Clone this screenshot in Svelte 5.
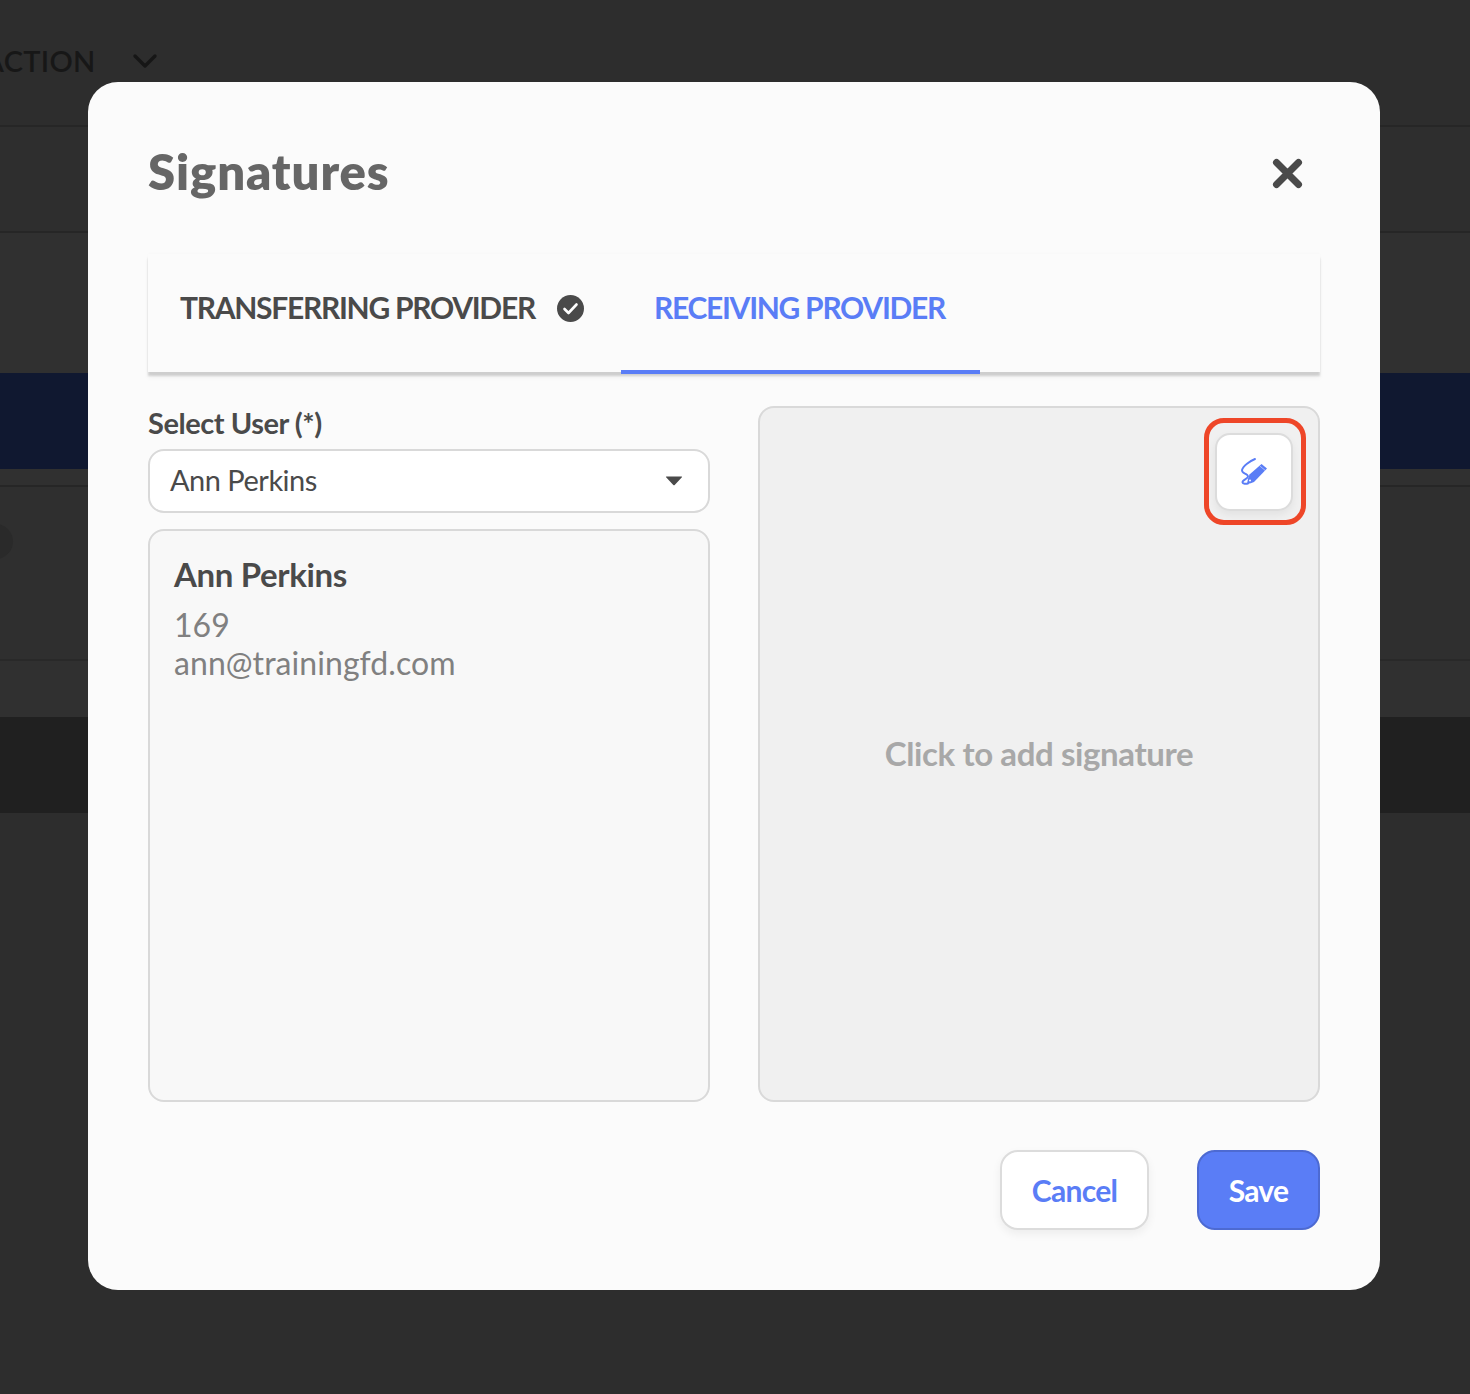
<script>
  const tabs = { first: 'TRANSFERRING PROVIDER', second: 'RECEIVING PROVIDER' };
</script>

<div class="page">
  <div class="bg">
    <div class="head">
      <span class="action">ACTION</span>
      <svg class="chev" width="26" height="16" viewBox="0 0 26 16"><path d="M3 3l10 10L23 3" fill="none" stroke="#161616" stroke-width="3.4" stroke-linecap="round" stroke-linejoin="round"/></svg>
    </div>
    <div class="row r1"></div>
    <div class="row r2"></div>
    <div class="navy"></div>
    <div class="row r3"></div>
    <div class="row r4"><span class="dot"></span></div>
    <div class="row r5"></div>
    <div class="dark"></div>
  </div>

  <div class="overlay">
    <section class="modal">
      <header class="top">
        <h1>Signatures</h1>
        <svg class="close" width="32" height="32" viewBox="0 0 32 32"><path d="M4.500 4.500l22 22M26.500 4.500l-22 22" fill="none" stroke="#4a4a4a" stroke-width="7" stroke-linecap="round"/></svg>
      </header>

      <nav class="tabs">
        <div class="tab t1">
          <span>{tabs.first}</span>
          <svg width="27" height="27" viewBox="0 0 27 27"><circle cx="13.500" cy="13.500" r="13.500" fill="#4a4a4a"/><path d="M7.500 14l4 4 8-8.500" fill="none" stroke="#fff" stroke-width="2.600" stroke-linecap="round" stroke-linejoin="round"/></svg>
        </div>
        <div class="tab t2"><span>{tabs.second}</span></div>
      </nav>

      <div class="cols">
        <div class="left">
          <label class="label" for="u">Select User (*)</label>
          <div class="select" id="u">
            <span class="sel-text">Ann Perkins</span>
            <svg width="18" height="10" viewBox="0 0 18 10"><path d="M1.500 0.500h15q1 0 .4.800L9.700 9q-.7.700-1.400 0L1.100 1.300q-.6-.8.400-.800z" fill="#4a4a4a"/></svg>
          </div>
          <div class="card">
            <h2>Ann Perkins</h2>
            <p>169</p>
            <p>ann@trainingfd.com</p>
          </div>
        </div>
        <div class="sig">
          <div class="highlight">
            <button class="pen" aria-label="Edit signature">
              <svg width="30" height="30" viewBox="0 0 30 30">
                <path d="M16 2C11 4 4 9 3 13C2.300 17 9 16 9 19.500C9 22 3 23 3.500 25.500C3.800 27 7 27 9 26.500" fill="none" stroke="#5a7df6" stroke-width="1.900" stroke-linecap="round"/>
                <path d="M22.500 7L28 11.500L15 25Q12 26.500 8 27Q8.500 22 10.500 17.500Z" fill="#5a7df6"/>
                <path d="M20.800 9l5.400 4.400" stroke="#fff" stroke-width=".7" opacity=".7" fill="none"/>
                <circle cx="11" cy="23.500" r="1" fill="#fff"/>
              </svg>
            </button>
          </div>
          <span class="hint">Click to add signature</span>
        </div>
      </div>

      <footer class="actions">
        <button class="btn cancel">Cancel</button>
        <button class="btn save">Save</button>
      </footer>
    </section>
  </div>
</div>

<style>
  :global(body) { margin: 0; background: #2d2d2d; }
  .page { position: relative; width: 1470px; height: 1394px; overflow: hidden; background: #2d2d2d; font-family: Lato, "Liberation Sans", sans-serif; }
  .bg { display: flex; flex-direction: column; }
  .head { height: 125px; border-bottom: 2px solid #262626; display: flex; align-items: flex-start; }
  .action { margin-left: -16px; margin-top: 44px; font-size: 29px; line-height: 34px; font-weight: 600; color: #171717; letter-spacing: .3px; width: 102px; flex: none; }
  .chev { margin-left: 46px; margin-top: 53px; }
  .row { box-sizing: border-box; background: #303030; }
  .r1 { height: 106px; border-bottom: 2px solid #262626; background: #2e2e2e; }
  .r2 { height: 140px; background: #303030; }
  .navy { height: 96px; background: #101830; }
  .r3 { height: 18px; border-bottom: 2px solid #262626; background: #303030; }
  .r4 { height: 174px; border-bottom: 2px solid #292929; background: #2f2f2f; position: relative; }
  .r5 { height: 56px; background: #303030; }
  .dot { position: absolute; left: -22px; top: 37px; width: 35px; height: 35px; border-radius: 50%; background: #2a2a2a; }
  .dark { height: 96px; background: #202020; }

  .overlay { position: absolute; inset: 0; display: flex; justify-content: center; align-items: flex-start; padding-top: 82px; padding-right: 2px; box-sizing: border-box; }
  .modal { box-sizing: border-box; width: 1292px; height: 1208px; background: #fbfbfb; border-radius: 30px; padding: 0 60px; display: flex; flex-direction: column; }
  .top { height: 172px; display: flex; justify-content: space-between; align-items: flex-start; }
  h1 { margin: 59px 0 0; font-size: 49px; line-height: 60px; font-weight: 800; color: #666; letter-spacing: 0.9px; }
  .close { margin-top: 76px; margin-right: 16px; }

  .tabs { height: 118px; margin-bottom: 2px; display: flex; background: #fbfbfb; box-shadow: 0 4px 2px rgba(0,0,0,.15), 0 6px 5px rgba(0,0,0,.04), 0 -1px 3px rgba(0,0,0,.015); }
  .tab { box-sizing: border-box; display: flex; align-items: center; font-size: 30px; font-weight: 700; letter-spacing: -1.28px; }
  .tab span, .tab svg { position: relative; }
  .t1 { height: 118px; width: 473px; padding-left: 32px; color: #4a4a4a; gap: 22px; }
  .t1 span { top: -6px; }
  .t1 svg { top: -5px; }
  .t2 { height: 120px; width: 359px; padding-right: 2px; justify-content: center; color: #5a7df6; border-bottom: 4px solid #5a7df6; }
  .t2 span { top: -5px; }

  .cols { display: flex; gap: 48px; height: 696px; margin-top: 32px; }
  .left { width: 562px; display: flex; flex-direction: column; }
  .label { font-size: 29px; line-height: 36px; font-weight: 700; color: #4a4a4a; letter-spacing: -0.45px; margin-top: -1px; margin-bottom: 8px; }
  .select { box-sizing: border-box; height: 64px; background: #fff; border: 2px solid #d9d9d9; border-radius: 16px; padding: 0 25px 0 20px; display: flex; align-items: center; justify-content: space-between; font-size: 29px; color: #4a4a4a; letter-spacing: -0.5px; }
  .sel-text { position: relative; top: -2px; }
  .card { box-sizing: border-box; flex: 1; margin-top: 16px; background: #f8f8f8; border: 2px solid #d9d9d9; border-radius: 16px; padding: 22px 24px; }
  h2 { margin: 0 0 11px; font-size: 33px; line-height: 42px; font-weight: 700; color: #4a4a4a; letter-spacing: -0.35px; }
  .card p { margin: 0; font-size: 32px; line-height: 38px; color: #808080; letter-spacing: 0.06px; }

  .sig { position: relative; box-sizing: border-box; width: 562px; background: #f0f0f0; border: 2px solid #d9d9d9; border-radius: 16px; display: flex; align-items: center; justify-content: center; }
  .hint { font-size: 33px; font-weight: 700; color: #a8a8a8; letter-spacing: -0.4px; position: relative; top: -1px; }
  .highlight { position: absolute; top: 10px; right: 12px; width: 102px; height: 107px; box-sizing: border-box; border: 5px solid #ee4628; border-radius: 20px; display: flex; align-items: center; justify-content: center; }
  .pen { box-sizing: border-box; width: 78px; height: 78px; margin-right: 2px; padding: 0; background: #fff; border: 2px solid #dcdcdc; border-radius: 15px; box-shadow: 0 4px 8px rgba(0,0,0,.06); display: flex; align-items: center; justify-content: center; }

  .actions { display: flex; justify-content: flex-end; gap: 48px; margin-top: 48px; }
  .btn { box-sizing: border-box; height: 80px; border-radius: 18px; font-family: inherit; font-size: 30px; font-weight: 700; }
  .cancel { width: 149px; background: #fff; border: 2px solid #dcdcdc; color: #5a7df6; letter-spacing: -0.7px; box-shadow: 0 4px 10px rgba(0,0,0,.06); }
  .save { width: 123px; background: #5a7df6; border: 2px solid #4d6ad2; color: #fff; letter-spacing: -0.8px; }
</style>
